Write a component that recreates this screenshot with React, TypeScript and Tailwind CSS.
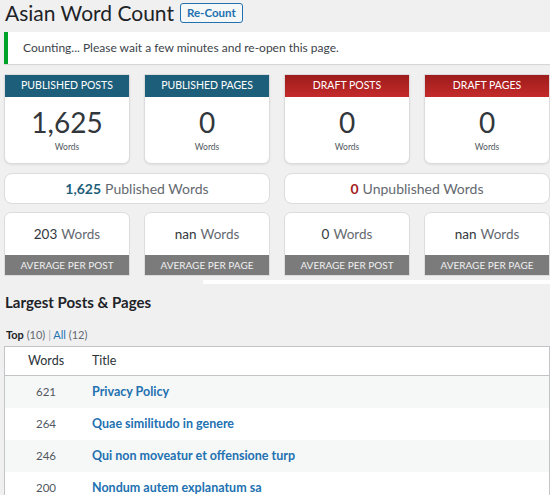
import React from "react";

const font = { fontFamily: 'Lato, "Noto Sans", sans-serif' };

function StatCard({ title, value, red }: { title: string; value: string; red?: boolean }) {
  return (
    <div className="flex w-[126px] flex-col overflow-hidden rounded-b-[7px] border border-[#dcdcde] bg-white shadow-[0_1px_2px_rgba(0,0,0,0.08)]">
      <div
        className={
          red
            ? "flex h-[22px] items-center justify-center bg-gradient-to-b from-[#9e1c1c] to-[#c42a2a] text-[10.5px] text-white"
            : "flex h-[22px] items-center justify-center bg-[#1d5e7a] text-[10.5px] text-white"
        }
      >
        {title}
      </div>
      <div className="flex h-[66px] flex-col items-center">
        <div className="mt-[9px] text-[28px] leading-[32px] text-[#32373c]">{value}</div>
        <div className="mt-[3px] text-[8.5px] text-[#50575e]">Words</div>
      </div>
    </div>
  );
}

function AvgCard({ value, label }: { value: string; label: string }) {
  return (
    <div className="flex w-[126px] flex-col overflow-hidden rounded-t-[7px] border border-[#dcdcde] bg-white">
      <div className="flex h-[42px] items-center justify-center text-[13.5px] text-[#32373c]">
        <span className="text-[#32373c]">{value}</span>
        <span className="ml-[4px] text-[#646970]">Words</span>
      </div>
      <div className="flex h-[20px] items-center justify-center bg-[#7b7b7b] text-[10px] text-[#f0f0f0]">{label}</div>
    </div>
  );
}

export default function App() {
  const rows = [
    ["621", "Privacy Policy"],
    ["264", "Quae similitudo in genere"],
    ["246", "Qui non moveatur et offensione turp"],
    ["200", "Nondum autem explanatum sa"],
  ];
  return (
    <div className="h-[495px] w-[550px] overflow-hidden bg-[#f0f0f1]" style={font}>
      <div className="flex h-[26px] items-center pl-[5px]">
        <h1 className="text-[21px] leading-[26px] text-[#1d2327]">Asian Word Count</h1>
        <button className="ml-[6px] h-[20px] rounded-[3px] border border-[#2271b1] bg-[#f6f7f7] px-[6px] text-[11.5px] font-bold leading-[18px] text-[#2271b1]">
          Re-Count
        </button>
      </div>
      <div className="ml-[4px] mt-[6px] flex h-[32px] items-center border-l-[4px] border-[#00a32a] bg-white pl-[15px] text-[12px] text-[#3c434a] shadow-[0_1px_1px_rgba(0,0,0,0.1)]">
        Counting... Please wait a few minutes and re-open this page.
      </div>
      <div className="ml-[4px] mt-[10px] flex gap-[14px]">
        <StatCard title="PUBLISHED POSTS" value="1,625" />
        <StatCard title="PUBLISHED PAGES" value="0" />
        <StatCard title="DRAFT POSTS" value="0" red />
        <StatCard title="DRAFT PAGES" value="0" red />
      </div>
      <div className="ml-[4px] mt-[9px] flex gap-[14px]">
        <div className="flex h-[31px] w-[266px] items-center justify-center rounded-[8px] border border-[#dcdcde] bg-white text-[14px] text-[#646970]">
          <span className="font-bold text-[#1d5e7a]">1,625</span>
          <span className="ml-[4px]">Published Words</span>
        </div>
        <div className="flex h-[31px] w-[266px] items-center justify-center rounded-[8px] border border-[#dcdcde] bg-white text-[14px] text-[#646970]">
          <span className="font-bold text-[#a51d1d]">0</span>
          <span className="ml-[4px]">Unpublished Words</span>
        </div>
      </div>
      <div className="ml-[4px] mt-[8px] flex gap-[14px]">
        <AvgCard value="203" label="AVERAGE PER POST" />
        <AvgCard value="nan" label="AVERAGE PER PAGE" />
        <AvgCard value="0" label="AVERAGE PER POST" />
        <AvgCard value="nan" label="AVERAGE PER PAGE" />
      </div>
      <div className="ml-[203px] mt-[4px] h-[4px] bg-white" />
      <h2 className="ml-[5px] mt-[8px] text-[15px] font-bold leading-[20px] text-[#1d2327]">Largest Posts &amp; Pages</h2>
      <div className="ml-[6px] mt-[16px] text-[11px] leading-[14px] text-[#646970]">
        <span className="font-bold text-[#1d2327]">Top</span> (10) <span className="text-[#a7aaad]">|</span>{" "}
        <span className="text-[#2271b1]">All</span> (12)
      </div>
      <div className="ml-[4px] mt-[4px] border border-[#c3c4c7] bg-white">
        <div className="flex h-[29px] items-center border-b border-[#c3c4c7] text-[12.5px] text-[#2c3338]">
          <div className="w-[87px] pl-[23px]">Words</div>
          <div>Title</div>
        </div>
        {rows.map(([n, t], i) => (
          <div key={n} className={`flex h-[32px] items-center ${i % 2 === 0 ? "bg-[#f6f7f7]" : "bg-white"}`}>
            <div className="w-[87px] pl-[31px] text-[11.5px] text-[#50575e]">{n}</div>
            <div className="whitespace-nowrap text-[12.5px] font-bold text-[#2271b1]">{t}</div>
          </div>
        ))}
      </div>
    </div>
  );
}
